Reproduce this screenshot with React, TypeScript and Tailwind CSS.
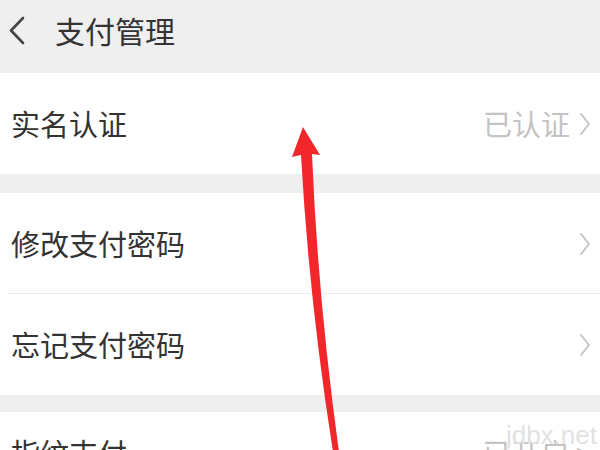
import React from "react";

const Chevron = ({ className }: { className?: string }) => (
  <svg className={className} viewBox="0 0 14 26" fill="none" stroke="currentColor" strokeWidth={2} strokeLinecap="round" strokeLinejoin="round">
    <path d="M3 3 L11 13 L3 23" />
  </svg>
);

const Row = ({ label, value, bottomLine }: { label: string; value?: string; bottomLine?: boolean }) => (
  <div className="relative flex h-[101px] items-center justify-between bg-white pl-[11px] pr-[8px]">
    <span className="text-[29px] leading-none text-[#333]">{label}</span>
    <div className="flex items-center gap-[8px] text-[#c4c4c4]">
      {value && <span className="text-[29px] leading-none">{value}</span>}
      <Chevron className="h-[26px] w-[14px]" />
    </div>
    {bottomLine && <div className="absolute bottom-0 left-[8px] right-0 h-px bg-[#ececec]" />}
  </div>
);

export default function App() {
  return (
    <div
      className="relative h-[450px] w-[600px] overflow-hidden bg-[#efefef]"
      style={{ fontFamily: '"Noto Sans CJK SC", "Noto Sans", sans-serif' }}
    >
      <div className="flex h-[73px] items-center bg-[#efefef] pb-[14px]">
        <svg className="ml-[6px] h-[30px] w-[20px] text-[#444]" viewBox="0 0 20 30" fill="none" stroke="currentColor" strokeWidth={2.6} strokeLinecap="round" strokeLinejoin="round">
          <path d="M17 3 L5 15.5 L17 28" />
        </svg>
        <span className="ml-[29px] text-[30px] leading-none text-[#333]">支付管理</span>
      </div>
      <Row label="实名认证" value="已认证" />
      <div className="h-[19px]" />
      <Row label="修改支付密码" bottomLine />
      <Row label="忘记支付密码" />
      <div className="h-[17px]" />
      <div className="relative flex h-[60px] items-start justify-between bg-white pl-[11px] pr-[8px] pt-[26px]">
        <span className="text-[29px] leading-none text-[#333]">指纹支付</span>
        <span className="text-[29px] leading-none text-[#c4c4c4]">已开启 &gt;</span>
        <span className="absolute right-[3px] top-[10px] text-[26px] leading-none text-[#e2e2e2]" style={{ fontFamily: '"Liberation Sans", sans-serif' }}>
          jdbx.net
        </span>
      </div>
      <svg className="absolute left-0 top-0" width="600" height="450" viewBox="0 0 600 450">
        <path
          d="M303 127 L320 155 L312 154 Q318 300 339 452 L333 452 Q309 300 301 155 L292 157 Z"
          fill="#f2272b"
        />
      </svg>
    </div>
  );
}
